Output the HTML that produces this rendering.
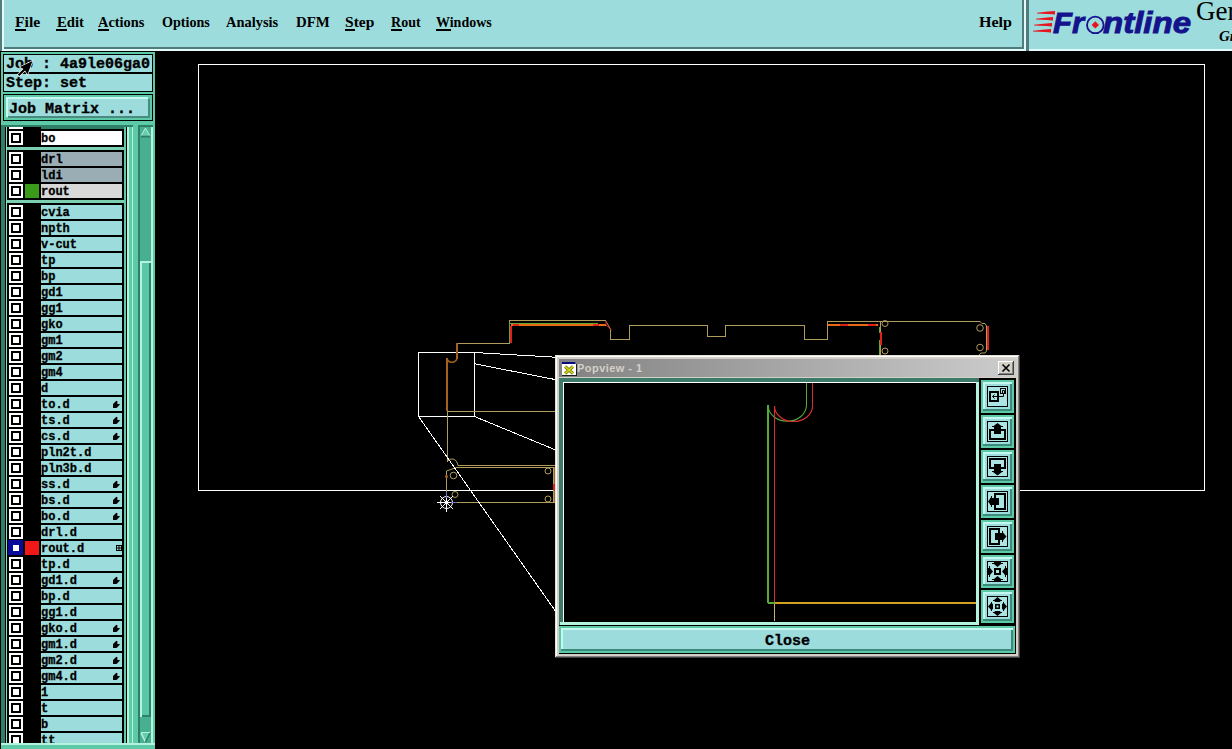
<!DOCTYPE html><html><head><meta charset="utf-8"><style>
html,body{margin:0;padding:0;background:#000;width:1232px;height:749px;overflow:hidden;position:relative}
div{position:absolute;box-sizing:border-box}
.menu{font-family:"Liberation Serif",serif;font-weight:bold;font-size:15px;line-height:18px;color:#000;white-space:nowrap}
.mono15{font-family:"Liberation Mono",monospace;font-weight:bold;font-size:15px;line-height:18px;color:#000;white-space:nowrap;-webkit-text-stroke:0.35px #000}
.mono12{font-family:"Liberation Mono",monospace;font-weight:bold;font-size:12px;line-height:18px;color:#000;white-space:nowrap;-webkit-text-stroke:0.3px #000}
.ptitle{font-family:"Liberation Sans",sans-serif;font-weight:bold;font-size:11px;line-height:16px;color:#d4d0c8;white-space:nowrap}
u{text-decoration:none}
span{position:static}
</style></head><body>
<div style="left:0px;top:0px;width:1232px;height:51px;background:#9cdcdc;"></div>
<div style="left:0px;top:0px;width:2px;height:51px;background:#507c7c;"></div>
<div style="left:2px;top:0px;width:2px;height:49px;background:#e4fafa;"></div>
<div style="left:4px;top:47px;width:1019px;height:2px;background:#507c7c;"></div>
<div style="left:2px;top:49px;width:1230px;height:2px;background:#e4fafa;"></div>
<div style="left:1022px;top:0px;width:2px;height:49px;background:#507c7c;"></div>
<div style="left:1024px;top:0px;width:2px;height:49px;background:#e4fafa;"></div>
<div style="left:1026px;top:0px;width:3px;height:51px;background:#507c7c;"></div>
<div class="menu" style="left:15px;top:13px;transform:scaleX(1.043);transform-origin:0 0">File</div>
<div style="left:15px;top:29px;width:11px;height:2px;background:#000;"></div>
<div class="menu" style="left:56.5px;top:13px;transform:scaleX(0.981);transform-origin:0 0">Edit</div>
<div style="left:56px;top:29px;width:11px;height:2px;background:#000;"></div>
<div class="menu" style="left:98px;top:13px;transform:scaleX(0.958);transform-origin:0 0">Actions</div>
<div style="left:98px;top:29px;width:11px;height:2px;background:#000;"></div>
<div class="menu" style="left:162px;top:13px;transform:scaleX(0.940);transform-origin:0 0">Options</div>
<div class="menu" style="left:226px;top:13px;transform:scaleX(0.963);transform-origin:0 0">Analysis</div>
<div class="menu" style="left:296px;top:13px;transform:scaleX(0.988);transform-origin:0 0">DFM</div>
<div class="menu" style="left:345px;top:13px;transform:scaleX(1.037);transform-origin:0 0">Step</div>
<div style="left:345px;top:29px;width:10px;height:2px;background:#000;"></div>
<div class="menu" style="left:391px;top:13px;transform:scaleX(0.935);transform-origin:0 0">Rout</div>
<div style="left:391px;top:29px;width:11px;height:2px;background:#000;"></div>
<div class="menu" style="left:436px;top:13px;transform:scaleX(0.932);transform-origin:0 0">Windows</div>
<div style="left:436px;top:29px;width:15px;height:2px;background:#000;"></div>
<div class="menu" style="left:979px;top:13px;transform:scaleX(1.069);transform-origin:0 0">Help</div>
<svg style="position:absolute;left:1029px;top:0" width="203" height="49" viewBox="1029 0 203 49">
<g fill="#e8141e">
<polygon points="1037,12.8 1048,11.6 1055,11 1055,14.5 1048,14 1037,13.4"/>
<polygon points="1036,18.8 1047,17.6 1053,17 1053,20.5 1047,20 1036,19.4"/>
<polygon points="1034,24.8 1046,23.6 1052,23 1052,26.5 1046,26 1034,25.4"/>
<polygon points="1033,30.8 1045,29.6 1051,29 1051,32.5 1045,32 1033,31.4"/>
</g>
<text x="1053" y="33" font-family="Liberation Sans" font-weight="bold" font-style="italic" font-size="29.5" fill="#14128c" stroke="#14128c" stroke-width="0.9" textLength="31" lengthAdjust="spacingAndGlyphs">Fr</text>
<circle cx="1095.3" cy="24.9" r="8.3" fill="none" stroke="#14128c" stroke-width="1.8"/>
<polygon points="1095.3,21.2 1099,24.9 1095.3,28.6 1091.6,24.9" fill="#e8141e"/>
<text x="1103" y="33" font-family="Liberation Sans" font-weight="bold" font-style="italic" font-size="29.5" fill="#14128c" stroke="#14128c" stroke-width="0.9" textLength="88" lengthAdjust="spacingAndGlyphs">ntline</text>
<text x="1196" y="20" font-family="Liberation Serif" font-size="27" fill="#000">Ger</text>
<text x="1219" y="41" font-family="Liberation Serif" font-weight="bold" font-style="italic" font-size="15" fill="#000">Gr</text>
</svg>
<div style="left:0px;top:51px;width:156px;height:698px;background:#000;"></div>
<div style="left:1px;top:52px;width:2px;height:697px;background:#5cc9a7;"></div>
<div style="left:153px;top:52px;width:2px;height:697px;background:#5cc9a7;"></div>
<div style="left:1px;top:52px;width:154px;height:2px;background:#5cc9a7;"></div>
<div style="left:4px;top:55px;width:148px;height:17px;background:#9cdcdc;"></div>
<div style="left:4px;top:74px;width:148px;height:17px;background:#9cdcdc;"></div>
<div style="left:3px;top:92px;width:150px;height:2px;background:#5cc9a7;"></div>
<div style="left:4px;top:95px;width:148px;height:25px;background:#5cc9a7;"></div>
<div style="left:6px;top:97px;width:142px;height:2px;background:#c4f8f0;"></div>
<div style="left:6px;top:97px;width:2px;height:20px;background:#c4f8f0;"></div>
<div style="left:8px;top:99px;width:140px;height:17px;background:#9cdcdc;"></div>
<div style="left:8px;top:116px;width:142px;height:2px;background:#4a8a80;"></div>
<div style="left:148px;top:99px;width:2px;height:19px;background:#4a8a80;"></div>
<div style="left:1px;top:121px;width:154px;height:4px;background:#5cc9a7;"></div>
<div class="mono15" style="left:6px;top:56px;">Job : 4a9le06ga0</div>
<div class="mono15" style="left:6px;top:75px;">Step: set</div>
<div class="mono15" style="left:9px;top:101px;">Job Matrix ...</div>
<div style="left:1px;top:125px;width:4px;height:618px;background:#2f7f68;"></div>
<div style="left:6px;top:125px;width:1px;height:618px;background:#88e0c0;"></div>
<div style="left:1px;top:125px;width:133px;height:2px;background:#2f7f68;"></div>
<div style="left:124px;top:127px;width:2px;height:616px;background:#5cc9a7;"></div>
<div style="left:127px;top:127px;width:2px;height:616px;background:#b4f4de;"></div>
<div style="left:129px;top:127px;width:3px;height:616px;background:#5cc9a7;"></div>
<div style="left:132px;top:127px;width:1px;height:616px;background:#b4f4de;"></div>
<div style="left:133px;top:125px;width:5px;height:618px;background:#5cc9a7;"></div>
<div style="left:138px;top:125px;width:2px;height:618px;background:#2f7f68;"></div>
<div style="left:140px;top:127px;width:11px;height:616px;background:#48b090;"></div>
<div style="left:151px;top:127px;width:2px;height:616px;background:#b4f4de;"></div>
<div style="left:138px;top:125px;width:15px;height:2px;background:#2f7f68;"></div>
<div style="left:1px;top:743px;width:154px;height:2px;background:#b4f4de;"></div>
<div style="left:1px;top:745px;width:154px;height:4px;background:#5cc9a7;"></div>
<svg style="position:absolute;left:140px;top:127px" width="11" height="11"><polygon points="5.5,1 10,9 1,9" fill="#66cdaa" stroke="#b4f4de" stroke-width="1"/><line x1="1" y1="9.5" x2="10" y2="9.5" stroke="#2f7f68" stroke-width="2"/></svg>
<svg style="position:absolute;left:140px;top:732px" width="11" height="11"><polygon points="1,1 10,1 5.5,10" fill="#66cdaa"/><line x1="1" y1="1" x2="5.5" y2="10" stroke="#b4f4de" stroke-width="1.5"/><line x1="10" y1="1" x2="5.5" y2="10" stroke="#2f7f68" stroke-width="1.5"/><line x1="1" y1="0.5" x2="10" y2="0.5" stroke="#b4f4de" stroke-width="1"/></svg>
<div style="left:140px;top:261px;width:11px;height:456px;background:#5ac8a8;"></div>
<div style="left:140px;top:261px;width:11px;height:2px;background:#b4f4de;"></div>
<div style="left:140px;top:261px;width:2px;height:456px;background:#b4f4de;"></div>
<div style="left:149px;top:263px;width:2px;height:454px;background:#2f7f68;"></div>
<div style="left:142px;top:715px;width:9px;height:2px;background:#2f7f68;"></div>
<div style="left:7px;top:127px;width:117px;height:616px;overflow:hidden;background:#000">
<div style="left:2px;top:0px;width:14px;height:2px;background:#fff;"></div>
<div style="left:34px;top:0px;width:83px;height:2px;background:#2f7f68;"></div>
<div style="left:34px;top:4px;width:81px;height:14px;background:#ffffff;"></div>
<div class="mono12" style="left:34px;top:3px;">bo</div>
<div style="left:2px;top:4px;width:14px;height:14px;background:#fff;"></div>
<div style="left:4px;top:6px;width:10px;height:10px;background:#000;"></div>
<div style="left:6px;top:8px;width:6px;height:6px;background:#fff;"></div>
<div style="left:34px;top:25px;width:81px;height:14px;background:#9aacb4;"></div>
<div class="mono12" style="left:34px;top:24px;">drl</div>
<div style="left:2px;top:25px;width:14px;height:14px;background:#fff;"></div>
<div style="left:4px;top:27px;width:10px;height:10px;background:#000;"></div>
<div style="left:6px;top:29px;width:6px;height:6px;background:#fff;"></div>
<div style="left:34px;top:41px;width:81px;height:14px;background:#9aacb4;"></div>
<div class="mono12" style="left:34px;top:40px;">ldi</div>
<div style="left:2px;top:41px;width:14px;height:14px;background:#fff;"></div>
<div style="left:4px;top:43px;width:10px;height:10px;background:#000;"></div>
<div style="left:6px;top:45px;width:6px;height:6px;background:#fff;"></div>
<div style="left:34px;top:57px;width:81px;height:14px;background:#d8d8d8;"></div>
<div class="mono12" style="left:34px;top:56px;">rout</div>
<div style="left:2px;top:57px;width:14px;height:14px;background:#fff;"></div>
<div style="left:4px;top:59px;width:10px;height:10px;background:#000;"></div>
<div style="left:6px;top:61px;width:6px;height:6px;background:#fff;"></div>
<div style="left:18px;top:57px;width:14px;height:14px;background:#3a9a1a;"></div>
<div style="left:34px;top:78px;width:81px;height:14px;background:#9cdcdc;"></div>
<div class="mono12" style="left:34px;top:77px;">cvia</div>
<div style="left:2px;top:78px;width:14px;height:14px;background:#fff;"></div>
<div style="left:4px;top:80px;width:10px;height:10px;background:#000;"></div>
<div style="left:6px;top:82px;width:6px;height:6px;background:#fff;"></div>
<div style="left:34px;top:94px;width:81px;height:14px;background:#9cdcdc;"></div>
<div class="mono12" style="left:34px;top:93px;">npth</div>
<div style="left:2px;top:94px;width:14px;height:14px;background:#fff;"></div>
<div style="left:4px;top:96px;width:10px;height:10px;background:#000;"></div>
<div style="left:6px;top:98px;width:6px;height:6px;background:#fff;"></div>
<div style="left:34px;top:110px;width:81px;height:14px;background:#9cdcdc;"></div>
<div class="mono12" style="left:34px;top:109px;">v-cut</div>
<div style="left:2px;top:110px;width:14px;height:14px;background:#fff;"></div>
<div style="left:4px;top:112px;width:10px;height:10px;background:#000;"></div>
<div style="left:6px;top:114px;width:6px;height:6px;background:#fff;"></div>
<div style="left:34px;top:126px;width:81px;height:14px;background:#9cdcdc;"></div>
<div class="mono12" style="left:34px;top:125px;">tp</div>
<div style="left:2px;top:126px;width:14px;height:14px;background:#fff;"></div>
<div style="left:4px;top:128px;width:10px;height:10px;background:#000;"></div>
<div style="left:6px;top:130px;width:6px;height:6px;background:#fff;"></div>
<div style="left:34px;top:142px;width:81px;height:14px;background:#9cdcdc;"></div>
<div class="mono12" style="left:34px;top:141px;">bp</div>
<div style="left:2px;top:142px;width:14px;height:14px;background:#fff;"></div>
<div style="left:4px;top:144px;width:10px;height:10px;background:#000;"></div>
<div style="left:6px;top:146px;width:6px;height:6px;background:#fff;"></div>
<div style="left:34px;top:158px;width:81px;height:14px;background:#9cdcdc;"></div>
<div class="mono12" style="left:34px;top:157px;">gd1</div>
<div style="left:2px;top:158px;width:14px;height:14px;background:#fff;"></div>
<div style="left:4px;top:160px;width:10px;height:10px;background:#000;"></div>
<div style="left:6px;top:162px;width:6px;height:6px;background:#fff;"></div>
<div style="left:34px;top:174px;width:81px;height:14px;background:#9cdcdc;"></div>
<div class="mono12" style="left:34px;top:173px;">gg1</div>
<div style="left:2px;top:174px;width:14px;height:14px;background:#fff;"></div>
<div style="left:4px;top:176px;width:10px;height:10px;background:#000;"></div>
<div style="left:6px;top:178px;width:6px;height:6px;background:#fff;"></div>
<div style="left:34px;top:190px;width:81px;height:14px;background:#9cdcdc;"></div>
<div class="mono12" style="left:34px;top:189px;">gko</div>
<div style="left:2px;top:190px;width:14px;height:14px;background:#fff;"></div>
<div style="left:4px;top:192px;width:10px;height:10px;background:#000;"></div>
<div style="left:6px;top:194px;width:6px;height:6px;background:#fff;"></div>
<div style="left:34px;top:206px;width:81px;height:14px;background:#9cdcdc;"></div>
<div class="mono12" style="left:34px;top:205px;">gm1</div>
<div style="left:2px;top:206px;width:14px;height:14px;background:#fff;"></div>
<div style="left:4px;top:208px;width:10px;height:10px;background:#000;"></div>
<div style="left:6px;top:210px;width:6px;height:6px;background:#fff;"></div>
<div style="left:34px;top:222px;width:81px;height:14px;background:#9cdcdc;"></div>
<div class="mono12" style="left:34px;top:221px;">gm2</div>
<div style="left:2px;top:222px;width:14px;height:14px;background:#fff;"></div>
<div style="left:4px;top:224px;width:10px;height:10px;background:#000;"></div>
<div style="left:6px;top:226px;width:6px;height:6px;background:#fff;"></div>
<div style="left:34px;top:238px;width:81px;height:14px;background:#9cdcdc;"></div>
<div class="mono12" style="left:34px;top:237px;">gm4</div>
<div style="left:2px;top:238px;width:14px;height:14px;background:#fff;"></div>
<div style="left:4px;top:240px;width:10px;height:10px;background:#000;"></div>
<div style="left:6px;top:242px;width:6px;height:6px;background:#fff;"></div>
<div style="left:34px;top:254px;width:81px;height:14px;background:#9cdcdc;"></div>
<div class="mono12" style="left:34px;top:253px;">d</div>
<div style="left:2px;top:254px;width:14px;height:14px;background:#fff;"></div>
<div style="left:4px;top:256px;width:10px;height:10px;background:#000;"></div>
<div style="left:6px;top:258px;width:6px;height:6px;background:#fff;"></div>
<div style="left:34px;top:270px;width:81px;height:14px;background:#9cdcdc;"></div>
<div class="mono12" style="left:34px;top:269px;">to.d</div>
<div style="left:2px;top:270px;width:14px;height:14px;background:#fff;"></div>
<div style="left:4px;top:272px;width:10px;height:10px;background:#000;"></div>
<div style="left:6px;top:274px;width:6px;height:6px;background:#fff;"></div>
<svg style="position:absolute;left:101px;top:269px" width="14" height="14"><polygon points="5,8.1 8.3,4.8 9.4,5.3 9.4,7.9 12.2,8.2 8.6,12 5,12" fill="#000"/></svg>
<div style="left:34px;top:286px;width:81px;height:14px;background:#9cdcdc;"></div>
<div class="mono12" style="left:34px;top:285px;">ts.d</div>
<div style="left:2px;top:286px;width:14px;height:14px;background:#fff;"></div>
<div style="left:4px;top:288px;width:10px;height:10px;background:#000;"></div>
<div style="left:6px;top:290px;width:6px;height:6px;background:#fff;"></div>
<svg style="position:absolute;left:101px;top:285px" width="14" height="14"><polygon points="5,8.1 8.3,4.8 9.4,5.3 9.4,7.9 12.2,8.2 8.6,12 5,12" fill="#000"/></svg>
<div style="left:34px;top:302px;width:81px;height:14px;background:#9cdcdc;"></div>
<div class="mono12" style="left:34px;top:301px;">cs.d</div>
<div style="left:2px;top:302px;width:14px;height:14px;background:#fff;"></div>
<div style="left:4px;top:304px;width:10px;height:10px;background:#000;"></div>
<div style="left:6px;top:306px;width:6px;height:6px;background:#fff;"></div>
<svg style="position:absolute;left:101px;top:301px" width="14" height="14"><polygon points="5,8.1 8.3,4.8 9.4,5.3 9.4,7.9 12.2,8.2 8.6,12 5,12" fill="#000"/></svg>
<div style="left:34px;top:318px;width:81px;height:14px;background:#9cdcdc;"></div>
<div class="mono12" style="left:34px;top:317px;">pln2t.d</div>
<div style="left:2px;top:318px;width:14px;height:14px;background:#fff;"></div>
<div style="left:4px;top:320px;width:10px;height:10px;background:#000;"></div>
<div style="left:6px;top:322px;width:6px;height:6px;background:#fff;"></div>
<div style="left:34px;top:334px;width:81px;height:14px;background:#9cdcdc;"></div>
<div class="mono12" style="left:34px;top:333px;">pln3b.d</div>
<div style="left:2px;top:334px;width:14px;height:14px;background:#fff;"></div>
<div style="left:4px;top:336px;width:10px;height:10px;background:#000;"></div>
<div style="left:6px;top:338px;width:6px;height:6px;background:#fff;"></div>
<div style="left:34px;top:350px;width:81px;height:14px;background:#9cdcdc;"></div>
<div class="mono12" style="left:34px;top:349px;">ss.d</div>
<div style="left:2px;top:350px;width:14px;height:14px;background:#fff;"></div>
<div style="left:4px;top:352px;width:10px;height:10px;background:#000;"></div>
<div style="left:6px;top:354px;width:6px;height:6px;background:#fff;"></div>
<svg style="position:absolute;left:101px;top:349px" width="14" height="14"><polygon points="5,8.1 8.3,4.8 9.4,5.3 9.4,7.9 12.2,8.2 8.6,12 5,12" fill="#000"/></svg>
<div style="left:34px;top:366px;width:81px;height:14px;background:#9cdcdc;"></div>
<div class="mono12" style="left:34px;top:365px;">bs.d</div>
<div style="left:2px;top:366px;width:14px;height:14px;background:#fff;"></div>
<div style="left:4px;top:368px;width:10px;height:10px;background:#000;"></div>
<div style="left:6px;top:370px;width:6px;height:6px;background:#fff;"></div>
<svg style="position:absolute;left:101px;top:365px" width="14" height="14"><polygon points="5,8.1 8.3,4.8 9.4,5.3 9.4,7.9 12.2,8.2 8.6,12 5,12" fill="#000"/></svg>
<div style="left:34px;top:382px;width:81px;height:14px;background:#9cdcdc;"></div>
<div class="mono12" style="left:34px;top:381px;">bo.d</div>
<div style="left:2px;top:382px;width:14px;height:14px;background:#fff;"></div>
<div style="left:4px;top:384px;width:10px;height:10px;background:#000;"></div>
<div style="left:6px;top:386px;width:6px;height:6px;background:#fff;"></div>
<svg style="position:absolute;left:101px;top:381px" width="14" height="14"><polygon points="5,8.1 8.3,4.8 9.4,5.3 9.4,7.9 12.2,8.2 8.6,12 5,12" fill="#000"/></svg>
<div style="left:34px;top:398px;width:81px;height:14px;background:#9cdcdc;"></div>
<div class="mono12" style="left:34px;top:397px;">drl.d</div>
<div style="left:2px;top:398px;width:14px;height:14px;background:#fff;"></div>
<div style="left:4px;top:400px;width:10px;height:10px;background:#000;"></div>
<div style="left:6px;top:402px;width:6px;height:6px;background:#fff;"></div>
<div style="left:34px;top:414px;width:81px;height:14px;background:#9cdcdc;"></div>
<div class="mono12" style="left:34px;top:413px;">rout.d</div>
<div style="left:1px;top:413px;width:15px;height:15px;background:#0a0a9a;"></div>
<div style="left:6px;top:418px;width:6px;height:6px;background:#fff;"></div>
<div style="left:18px;top:414px;width:14px;height:14px;background:#f01818;"></div>
<svg style="position:absolute;left:109px;top:418px" width="6" height="6"><rect x="0.5" y="0.5" width="5" height="5" fill="none" stroke="#000" stroke-width="1"/><line x1="3" y1="0" x2="3" y2="6" stroke="#000"/><line x1="0" y1="3" x2="6" y2="3" stroke="#000"/></svg>
<div style="left:34px;top:430px;width:81px;height:14px;background:#9cdcdc;"></div>
<div class="mono12" style="left:34px;top:429px;">tp.d</div>
<div style="left:2px;top:430px;width:14px;height:14px;background:#fff;"></div>
<div style="left:4px;top:432px;width:10px;height:10px;background:#000;"></div>
<div style="left:6px;top:434px;width:6px;height:6px;background:#fff;"></div>
<div style="left:34px;top:446px;width:81px;height:14px;background:#9cdcdc;"></div>
<div class="mono12" style="left:34px;top:445px;">gd1.d</div>
<div style="left:2px;top:446px;width:14px;height:14px;background:#fff;"></div>
<div style="left:4px;top:448px;width:10px;height:10px;background:#000;"></div>
<div style="left:6px;top:450px;width:6px;height:6px;background:#fff;"></div>
<svg style="position:absolute;left:101px;top:445px" width="14" height="14"><polygon points="5,8.1 8.3,4.8 9.4,5.3 9.4,7.9 12.2,8.2 8.6,12 5,12" fill="#000"/></svg>
<div style="left:34px;top:462px;width:81px;height:14px;background:#9cdcdc;"></div>
<div class="mono12" style="left:34px;top:461px;">bp.d</div>
<div style="left:2px;top:462px;width:14px;height:14px;background:#fff;"></div>
<div style="left:4px;top:464px;width:10px;height:10px;background:#000;"></div>
<div style="left:6px;top:466px;width:6px;height:6px;background:#fff;"></div>
<div style="left:34px;top:478px;width:81px;height:14px;background:#9cdcdc;"></div>
<div class="mono12" style="left:34px;top:477px;">gg1.d</div>
<div style="left:2px;top:478px;width:14px;height:14px;background:#fff;"></div>
<div style="left:4px;top:480px;width:10px;height:10px;background:#000;"></div>
<div style="left:6px;top:482px;width:6px;height:6px;background:#fff;"></div>
<div style="left:34px;top:494px;width:81px;height:14px;background:#9cdcdc;"></div>
<div class="mono12" style="left:34px;top:493px;">gko.d</div>
<div style="left:2px;top:494px;width:14px;height:14px;background:#fff;"></div>
<div style="left:4px;top:496px;width:10px;height:10px;background:#000;"></div>
<div style="left:6px;top:498px;width:6px;height:6px;background:#fff;"></div>
<svg style="position:absolute;left:101px;top:493px" width="14" height="14"><polygon points="5,8.1 8.3,4.8 9.4,5.3 9.4,7.9 12.2,8.2 8.6,12 5,12" fill="#000"/></svg>
<div style="left:34px;top:510px;width:81px;height:14px;background:#9cdcdc;"></div>
<div class="mono12" style="left:34px;top:509px;">gm1.d</div>
<div style="left:2px;top:510px;width:14px;height:14px;background:#fff;"></div>
<div style="left:4px;top:512px;width:10px;height:10px;background:#000;"></div>
<div style="left:6px;top:514px;width:6px;height:6px;background:#fff;"></div>
<svg style="position:absolute;left:101px;top:509px" width="14" height="14"><polygon points="5,8.1 8.3,4.8 9.4,5.3 9.4,7.9 12.2,8.2 8.6,12 5,12" fill="#000"/></svg>
<div style="left:34px;top:526px;width:81px;height:14px;background:#9cdcdc;"></div>
<div class="mono12" style="left:34px;top:525px;">gm2.d</div>
<div style="left:2px;top:526px;width:14px;height:14px;background:#fff;"></div>
<div style="left:4px;top:528px;width:10px;height:10px;background:#000;"></div>
<div style="left:6px;top:530px;width:6px;height:6px;background:#fff;"></div>
<svg style="position:absolute;left:101px;top:525px" width="14" height="14"><polygon points="5,8.1 8.3,4.8 9.4,5.3 9.4,7.9 12.2,8.2 8.6,12 5,12" fill="#000"/></svg>
<div style="left:34px;top:542px;width:81px;height:14px;background:#9cdcdc;"></div>
<div class="mono12" style="left:34px;top:541px;">gm4.d</div>
<div style="left:2px;top:542px;width:14px;height:14px;background:#fff;"></div>
<div style="left:4px;top:544px;width:10px;height:10px;background:#000;"></div>
<div style="left:6px;top:546px;width:6px;height:6px;background:#fff;"></div>
<svg style="position:absolute;left:101px;top:541px" width="14" height="14"><polygon points="5,8.1 8.3,4.8 9.4,5.3 9.4,7.9 12.2,8.2 8.6,12 5,12" fill="#000"/></svg>
<div style="left:34px;top:558px;width:81px;height:14px;background:#9cdcdc;"></div>
<div class="mono12" style="left:34px;top:557px;">1</div>
<div style="left:2px;top:558px;width:14px;height:14px;background:#fff;"></div>
<div style="left:4px;top:560px;width:10px;height:10px;background:#000;"></div>
<div style="left:6px;top:562px;width:6px;height:6px;background:#fff;"></div>
<div style="left:34px;top:574px;width:81px;height:14px;background:#9cdcdc;"></div>
<div class="mono12" style="left:34px;top:573px;">t</div>
<div style="left:2px;top:574px;width:14px;height:14px;background:#fff;"></div>
<div style="left:4px;top:576px;width:10px;height:10px;background:#000;"></div>
<div style="left:6px;top:578px;width:6px;height:6px;background:#fff;"></div>
<div style="left:34px;top:590px;width:81px;height:14px;background:#9cdcdc;"></div>
<div class="mono12" style="left:34px;top:589px;">b</div>
<div style="left:2px;top:590px;width:14px;height:14px;background:#fff;"></div>
<div style="left:4px;top:592px;width:10px;height:10px;background:#000;"></div>
<div style="left:6px;top:594px;width:6px;height:6px;background:#fff;"></div>
<div style="left:34px;top:606px;width:81px;height:14px;background:#9cdcdc;"></div>
<div class="mono12" style="left:34px;top:605px;">tt</div>
<div style="left:2px;top:606px;width:14px;height:14px;background:#fff;"></div>
<div style="left:4px;top:608px;width:10px;height:10px;background:#000;"></div>
<div style="left:6px;top:610px;width:6px;height:6px;background:#fff;"></div>
<div style="left:0px;top:20px;width:117px;height:3px;background:#7ad0b0;"></div>
<div style="left:0px;top:73px;width:117px;height:3px;background:#7ad0b0;"></div>
</div>
<svg style="position:absolute;left:0;top:0" width="40" height="80" viewBox="0 0 40 80"><polygon points="32.5,61 20,67 23.5,69 17.8,74.5 19.3,76 25,70.5 27.5,74.5" fill="#000" stroke="#fff" stroke-width="1.3" stroke-linejoin="miter"/><polygon points="32.5,61 20,67 23.5,69 17.8,74.5 19.3,76 25,70.5 27.5,74.5" fill="#000"/></svg>
<svg style="position:absolute;left:0;top:0" width="1232" height="749" viewBox="0 0 1232 749">
<g shape-rendering="crispEdges" fill="none" stroke-width="1">
<rect x="198.5" y="64.5" width="1006" height="426" stroke="#fff"/>
<rect x="418.5" y="352.5" width="56" height="64" stroke="#fff"/>
<path stroke="#b09c5c" d="M455.5,343.5 H509.5 V320.5 H605.5 M610.5,330 V339.5 H629.5 V325.5 H707.5 V336.5 H725.5 V325.5 H804.5 V339.5 H827.5 V321.5 H979.5 M986.5,326 V351 M880.5,321 V356 M447.5,411.5 H556 M447.5,411 V462 M457.5,465.5 H555 M455.5,467.5 H553 M446.5,471 V502 M446.5,502.5 H555 M553.5,467 V484 M553.5,490 V502"/>
<path stroke="#a4621e" stroke-width="2" d="M457,343 V359 M447,358 V411"/>
<path stroke="#60a830" d="M509.5,343 V323.5 H598 M879.5,327 V333 M879.5,340 V356"/>
<path stroke="#a4621e" d="M554.5,467 V502"/><path stroke="#e86a14" stroke-width="2" d="M511,325 H606 M828,325 H878"/>
<path stroke="#e02020" stroke-width="2" d="M513,325 H519 M593,325 H599 M511,326 V343 M840,325 H848 M868,325 H876 M881,332 V345 M554,484 V490 M988,326 V350"/>
</g>
<g fill="none" stroke-width="1">
<path stroke="#b09c5c" d="M605.5,320.5 L611,330 M979.5,321 L982,323.5 H985 L986.5,326 M986.5,351 L985,353 H981 L979,355 M447,462 Q449,458 453,459 Q457,460 458,465.5 M455.5,467.5 L451,469.5 L446.5,471"/>
<path stroke="#e02020" d="M606,321 V325 L611.5,330"/>
<path stroke="#a4621e" stroke-width="1.6" d="M457,359 Q455,363 450,362 Q447,361 447,358"/>
<circle cx="885" cy="323.5" r="3" stroke="#b09c5c"/>
<circle cx="885" cy="351" r="3" stroke="#b09c5c"/>
<circle cx="980" cy="328" r="3.3" stroke="#b09c5c"/>
<circle cx="980" cy="347.5" r="3.3" stroke="#b09c5c"/>
<circle cx="453.5" cy="475.5" r="3.3" stroke="#b09c5c"/>
<circle cx="455" cy="494.5" r="3" stroke="#b09c5c"/>
<circle cx="548" cy="471" r="3" stroke="#b09c5c"/>
<circle cx="548" cy="499" r="3" stroke="#b09c5c"/>
<circle cx="446.5" cy="476.5" r="1.5" fill="#a4621e" stroke="none"/>
<path stroke="#fff" shape-rendering="crispEdges" d="M474.5,352.5 L555,357.2 M474.5,363.8 L555,379.5 M474.5,416.5 L555,449.7 M418.5,416.5 L555,610.5"/>
<g stroke="#fff" stroke-width="1"><path d="M437,502.5 H456 M446.5,493 V512 M440,496 L453,509 M453,496 L440,509"/><circle cx="446.5" cy="502.5" r="6"/></g><circle cx="446.5" cy="502.5" r="2" fill="#fff"/>
<path stroke="#7070d0" d="M446.5,492 V498 M451,502.5 H457" />
</g>
</svg>
<div style="left:555px;top:355px;width:465px;height:303px;background:#d4d0c8;"></div>
<div style="left:555px;top:355px;width:464px;height:1px;background:#e4e0d8;"></div>
<div style="left:555px;top:355px;width:1px;height:302px;background:#e4e0d8;"></div>
<div style="left:556px;top:356px;width:462px;height:1px;background:#ffffff;"></div>
<div style="left:556px;top:356px;width:1px;height:300px;background:#ffffff;"></div>
<div style="left:1019px;top:355px;width:1px;height:303px;background:#404040;"></div>
<div style="left:555px;top:657px;width:465px;height:1px;background:#404040;"></div>
<div style="left:1018px;top:356px;width:1px;height:301px;background:#808080;"></div>
<div style="left:556px;top:656px;width:463px;height:1px;background:#808080;"></div>
<div style="left:559px;top:359px;width:457px;height:18px;background:linear-gradient(to right,#828282,#cccccc)"></div>
<svg style="position:absolute;left:561px;top:361px" width="17" height="16" viewBox="0 0 17 16">
<rect x="1" y="3" width="14" height="11" fill="#fff"/>
<rect x="1" y="1" width="13" height="2" fill="#0a0a80"/><rect x="14" y="1" width="1" height="2" fill="#5060a0"/>
<rect x="1" y="14" width="15" height="1" fill="#202020"/><rect x="15" y="3" width="1" height="12" fill="#202020"/>
<path d="M4,5.5 L12,12.5 M12,5.5 L4,12.5" stroke="#707800" stroke-width="3"/>
<path d="M4,5.5 L12,12.5 M12,5.5 L4,12.5" stroke="#d8d820" stroke-width="1.6"/>
</svg>
<div class="ptitle" style="left:577px;top:360px;letter-spacing:0.45px">Popview - 1</div>
<div style="left:998px;top:361px;width:16px;height:14px;background:#d4d0c8;box-shadow: inset -1px -1px #404040, inset 1px 1px #fff, inset -2px -2px #808080;"></div>
<svg style="position:absolute;left:998px;top:361px" width="16" height="14"><path d="M4.5,3.5 L11.5,10.5 M11.5,3.5 L4.5,10.5" stroke="#000" stroke-width="1.6"/></svg>
<div style="left:559px;top:378px;width:457px;height:276px;background:#000;"></div>
<div style="left:559px;top:378px;width:420px;height:4px;background:#3c7a6a;"></div>
<div style="left:559px;top:378px;width:4px;height:247px;background:#3c7a6a;"></div>
<div style="left:563px;top:382px;width:413px;height:1px;background:#ffffff;"></div>
<div style="left:563px;top:382px;width:1px;height:240px;background:#ffffff;"></div>
<div style="left:560px;top:622px;width:419px;height:3px;background:#b4f4de;"></div>
<div style="left:976px;top:382px;width:3px;height:243px;background:#b4f4de;"></div>
<svg style="position:absolute;left:564px;top:383px" width="412" height="239" viewBox="564 383 412 239">
<path d="M768,603 L768,405" fill="none" stroke="#58a83a" stroke-width="2"/><path d="M768,405 A19,16 0 0 0 806.5,405" fill="none" stroke="#58a83a" stroke-width="1.1"/><path d="M806.5,405 L806.5,383" fill="none" stroke="#58a83a" stroke-width="1" shape-rendering="crispEdges"/>
<path d="M774.5,603 L774.5,406" fill="none" stroke="#d83030" stroke-width="1" shape-rendering="crispEdges"/><path d="M774.5,406 A19,15.5 0 0 0 812.5,406" fill="none" stroke="#d83030" stroke-width="1.2"/><path d="M812.5,406 L812.5,383" fill="none" stroke="#d83030" stroke-width="1" shape-rendering="crispEdges"/>
<path d="M768,603 L775,603" stroke="#58a83a" stroke-width="2"/>
<path d="M775,603 L976,603" stroke="#d4a020" stroke-width="2"/>
<path d="M774.5,604 L774.5,621" stroke="#c8b070" stroke-width="1"/>
</svg>
<div style="left:981px;top:380px;width:33px;height:33px;background:#5cc9a7;"></div>
<div style="left:983px;top:382px;width:29px;height:2px;background:#c4f8f0;"></div>
<div style="left:983px;top:382px;width:2px;height:29px;background:#c4f8f0;"></div>
<div style="left:985px;top:384px;width:25px;height:25px;background:#9cdcdc;"></div>
<div style="left:983px;top:409px;width:29px;height:2px;background:#3c8a7a;"></div>
<div style="left:1010px;top:384px;width:2px;height:27px;background:#3c8a7a;"></div>
<svg style="position:absolute;left:984px;top:383px" width="28" height="28" viewBox="0 0 28 28"><rect x="3.5" y="3.5" width="20" height="20" fill="#ace4e4" stroke="#000" stroke-width="1"/><rect x="6" y="9" width="8" height="9" fill="none" stroke="#000" stroke-width="2"/><path d="M8.5,13.5 H13 M8.5,13.5 L10.5,11.5 M8.5,13.5 L10.5,15.5" stroke="#000" stroke-width="1" fill="none"/><rect x="16.5" y="5.5" width="5" height="5" fill="none" stroke="#000"/><path d="M18.5,10 V7.5 H20.5 V10 M19.5,11 V13.5 H15" fill="none" stroke="#000"/></svg>
<div style="left:981px;top:415px;width:33px;height:33px;background:#5cc9a7;"></div>
<div style="left:983px;top:417px;width:29px;height:2px;background:#c4f8f0;"></div>
<div style="left:983px;top:417px;width:2px;height:29px;background:#c4f8f0;"></div>
<div style="left:985px;top:419px;width:25px;height:25px;background:#9cdcdc;"></div>
<div style="left:983px;top:444px;width:29px;height:2px;background:#3c8a7a;"></div>
<div style="left:1010px;top:419px;width:2px;height:27px;background:#3c8a7a;"></div>
<svg style="position:absolute;left:984px;top:418px" width="28" height="28" viewBox="0 0 28 28"><rect x="3.5" y="3.5" width="20" height="20" fill="#ace4e4" stroke="#000" stroke-width="1"/><rect x="6" y="12" width="15" height="9" fill="none" stroke="#000" stroke-width="2"/><rect x="10" y="8" width="7" height="8" fill="#000"/><polygon points="13.5,5 18,8.5 9,8.5" fill="#000"/><rect x="8" y="8" width="11" height="1" fill="#000"/></svg>
<div style="left:981px;top:450px;width:33px;height:33px;background:#5cc9a7;"></div>
<div style="left:983px;top:452px;width:29px;height:2px;background:#c4f8f0;"></div>
<div style="left:983px;top:452px;width:2px;height:29px;background:#c4f8f0;"></div>
<div style="left:985px;top:454px;width:25px;height:25px;background:#9cdcdc;"></div>
<div style="left:983px;top:479px;width:29px;height:2px;background:#3c8a7a;"></div>
<div style="left:1010px;top:454px;width:2px;height:27px;background:#3c8a7a;"></div>
<svg style="position:absolute;left:984px;top:453px" width="28" height="28" viewBox="0 0 28 28"><rect x="3.5" y="3.5" width="20" height="20" fill="#ace4e4" stroke="#000" stroke-width="1"/><rect x="6" y="6" width="15" height="9" fill="none" stroke="#000" stroke-width="2"/><rect x="10" y="11" width="7" height="8" fill="#000"/><polygon points="9,19 18,19 13.5,22.5" fill="#000"/><rect x="8" y="18" width="11" height="1" fill="#000"/></svg>
<div style="left:981px;top:485px;width:33px;height:33px;background:#5cc9a7;"></div>
<div style="left:983px;top:487px;width:29px;height:2px;background:#c4f8f0;"></div>
<div style="left:983px;top:487px;width:2px;height:29px;background:#c4f8f0;"></div>
<div style="left:985px;top:489px;width:25px;height:25px;background:#9cdcdc;"></div>
<div style="left:983px;top:514px;width:29px;height:2px;background:#3c8a7a;"></div>
<div style="left:1010px;top:489px;width:2px;height:27px;background:#3c8a7a;"></div>
<svg style="position:absolute;left:984px;top:488px" width="28" height="28" viewBox="0 0 28 28"><rect x="3.5" y="3.5" width="20" height="20" fill="#ace4e4" stroke="#000" stroke-width="1"/><rect x="11" y="6" width="10" height="15" fill="none" stroke="#000" stroke-width="2"/><rect x="6" y="10" width="9" height="7" fill="#000"/><rect x="7" y="8" width="1" height="11" fill="#000"/><polygon points="7,9.5 7,17.5 4,13.5" fill="#000"/></svg>
<div style="left:981px;top:520px;width:33px;height:33px;background:#5cc9a7;"></div>
<div style="left:983px;top:522px;width:29px;height:2px;background:#c4f8f0;"></div>
<div style="left:983px;top:522px;width:2px;height:29px;background:#c4f8f0;"></div>
<div style="left:985px;top:524px;width:25px;height:25px;background:#9cdcdc;"></div>
<div style="left:983px;top:549px;width:29px;height:2px;background:#3c8a7a;"></div>
<div style="left:1010px;top:524px;width:2px;height:27px;background:#3c8a7a;"></div>
<svg style="position:absolute;left:984px;top:523px" width="28" height="28" viewBox="0 0 28 28"><rect x="3.5" y="3.5" width="20" height="20" fill="#ace4e4" stroke="#000" stroke-width="1"/><rect x="6" y="6" width="9" height="15" fill="none" stroke="#000" stroke-width="2"/><rect x="11" y="10" width="8" height="7" fill="#000"/><rect x="18" y="8" width="1" height="11" fill="#000"/><polygon points="19,9.5 19,17.5 22.5,13.5" fill="#000"/></svg>
<div style="left:981px;top:555px;width:33px;height:33px;background:#5cc9a7;"></div>
<div style="left:983px;top:557px;width:29px;height:2px;background:#c4f8f0;"></div>
<div style="left:983px;top:557px;width:2px;height:29px;background:#c4f8f0;"></div>
<div style="left:985px;top:559px;width:25px;height:25px;background:#9cdcdc;"></div>
<div style="left:983px;top:584px;width:29px;height:2px;background:#3c8a7a;"></div>
<div style="left:1010px;top:559px;width:2px;height:27px;background:#3c8a7a;"></div>
<svg style="position:absolute;left:984px;top:558px" width="28" height="28" viewBox="0 0 28 28"><rect x="3.5" y="3.5" width="20" height="20" fill="#ace4e4" stroke="#000" stroke-width="1"/><rect x="11" y="11" width="5" height="5" fill="none" stroke="#000" stroke-width="2"/><polygon points="10,4 17,4 17,6 13.5,9 10,6" fill="#000"/><rect x="8" y="5" width="11" height="1" fill="#000"/><polygon points="10,23 17,23 17,21 13.5,18 10,21" fill="#000"/><rect x="8" y="21" width="11" height="1" fill="#000"/><polygon points="4,10 4,17 6,17 9,13.5 6,10" fill="#000"/><rect x="5" y="8" width="1" height="11" fill="#000"/><polygon points="23,10 23,17 21,17 18,13.5 21,10" fill="#000"/><rect x="21" y="8" width="1" height="11" fill="#000"/></svg>
<div style="left:981px;top:590px;width:33px;height:33px;background:#5cc9a7;"></div>
<div style="left:983px;top:592px;width:29px;height:2px;background:#c4f8f0;"></div>
<div style="left:983px;top:592px;width:2px;height:29px;background:#c4f8f0;"></div>
<div style="left:985px;top:594px;width:25px;height:25px;background:#9cdcdc;"></div>
<div style="left:983px;top:619px;width:29px;height:2px;background:#3c8a7a;"></div>
<div style="left:1010px;top:594px;width:2px;height:27px;background:#3c8a7a;"></div>
<svg style="position:absolute;left:984px;top:593px" width="28" height="28" viewBox="0 0 28 28"><rect x="3.5" y="3.5" width="20" height="20" fill="#ace4e4" stroke="#000" stroke-width="1"/><rect x="11.75" y="11.75" width="3.5" height="3.5" fill="none" stroke="#000" stroke-width="1.5"/><polygon points="13.5,4 17,7 16,9 11,9 10,7" fill="#000"/><rect x="9" y="7" width="9" height="1" fill="#000"/><polygon points="13.5,23 17,20 16,18 11,18 10,20" fill="#000"/><rect x="9" y="19" width="9" height="1" fill="#000"/><polygon points="4,13.5 7,10 9,11 9,16 7,17" fill="#000"/><rect x="7" y="9" width="1" height="9" fill="#000"/><polygon points="23,13.5 20,10 18,11 18,16 20,17" fill="#000"/><rect x="19" y="9" width="1" height="9" fill="#000"/></svg>
<div style="left:559px;top:626px;width:456px;height:27px;background:#5cc9a7;"></div>
<div style="left:561px;top:628px;width:452px;height:2px;background:#c4f8f0;"></div>
<div style="left:561px;top:628px;width:2px;height:21px;background:#c4f8f0;"></div>
<div style="left:563px;top:630px;width:448px;height:19px;background:#9cdcdc;"></div>
<div style="left:561px;top:649px;width:452px;height:2px;background:#3c8a7a;"></div>
<div style="left:1011px;top:630px;width:2px;height:21px;background:#3c8a7a;"></div>
<div class="mono15" style="left:765px;top:633px;">Close</div>
</body></html>
